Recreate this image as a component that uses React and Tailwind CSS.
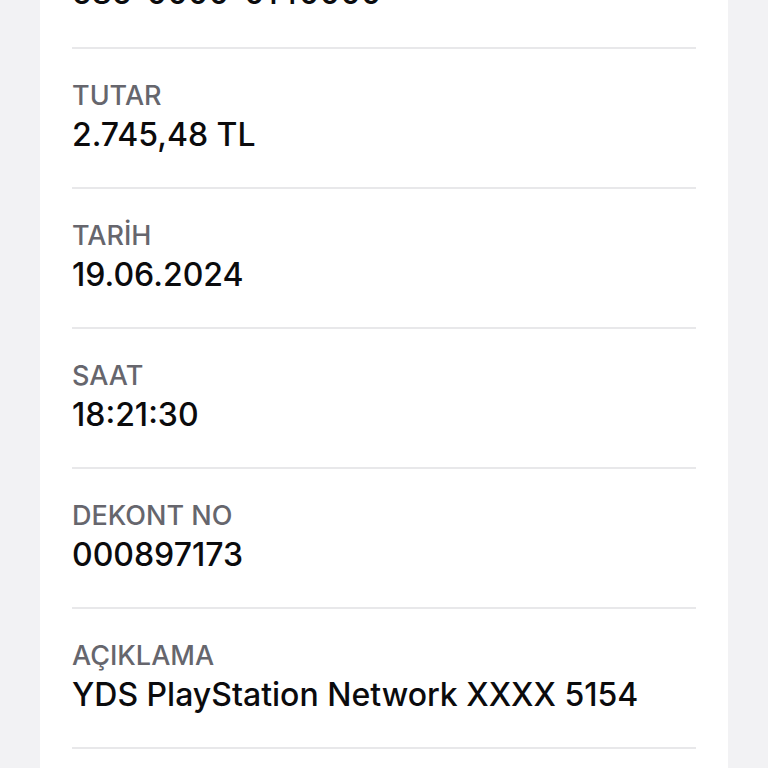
import React from 'react';

const rows = [
  { label: 'TUTAR', value: '2.745,48 TL' },
  { label: 'TARİH', value: '19.06.2024' },
  { label: 'SAAT', value: '18:21:30' },
  { label: 'DEKONT NO', value: '000897173' },
  { label: 'AÇIKLAMA', value: 'YDS PlayStation Network XXXX 5154' },
];

const DetailRow = ({ label, value }) => (
  <div className="pt-[33px] pb-[32px] border-b-2 border-[#e8e8ea]">
    <p className="text-[27px] leading-[28px] font-medium text-[#66666d]">{label}</p>
    <p className="mt-[5px] text-[32px] leading-[40px] font-medium text-[#0b0b0d]">{value}</p>
  </div>
);

export default function App() {
  return (
    <div className="w-[768px] h-[768px] overflow-hidden bg-[#f2f2f4] px-[40px]" style={{ fontFamily: 'Inter, "Noto Sans", sans-serif' }}>
      <div className="h-full flex flex-col bg-white px-[32px]">
        <div className="-mt-[27px] pb-[34px] border-b-2 border-[#e8e8ea]">
          <p className="text-[32px] leading-[40px] font-medium text-[#0b0b0d]">585-0000-0140000</p>
        </div>
        {rows.map((row) => (
          <DetailRow key={row.label} label={row.label} value={row.value} />
        ))}
      </div>
    </div>
  );
}
